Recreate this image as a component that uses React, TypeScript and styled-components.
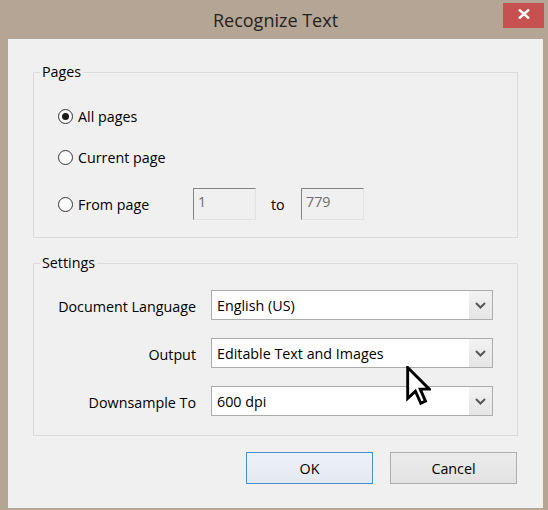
import React from "react";
import styled, { createGlobalStyle } from "styled-components";

const GlobalStyle = createGlobalStyle`
  html, body {
    margin: 0;
    padding: 0;
    background: #b5a595;
  }
  body {
    font-family: "Open Sans", "Noto Sans", "Liberation Sans", sans-serif;
    color: #000;
  }
  * { box-sizing: border-box; }
`;

const Window = styled.div`
  position: relative;
  width: 548px;
  height: 510px;
  display: flex;
  flex-direction: column;
  background: #b5a595;
  padding: 0 5px 2px 8px;
`;

const TitleBar = styled.div`
  height: 39px;
  flex: none;
  display: grid;
  grid-template-columns: 1fr auto 1fr;
  align-items: start;
`;

const Title = styled.div`
  grid-column: 2;
  font-size: 18px;
  line-height: 39px;
  padding-top: 1px;
  color: #262220;
  white-space: nowrap;
`;

const CloseButton = styled.div`
  grid-column: 3;
  justify-self: end;
  margin-top: 3px;
  margin-right: -1px;
  width: 41px;
  height: 25px;
  background: #c75050;
  display: flex;
  align-items: center;
  justify-content: center;
  padding-bottom: 3px;
`;

const Client = styled.div`
  flex: 1;
  background: #f0f0f0;
  padding: 24px 25px 0 25px;
  display: flex;
  flex-direction: column;
`;

const Group = styled.fieldset<{ $top?: number }>`
  margin: ${(p) => p.$top ?? 0}px 0 0 0;
  padding: 0;
  border: 1px solid #dcdcdc;
  min-width: 0;
`;

const Legend = styled.legend`
  margin-left: 6px;
  padding: 0 2px;
  font-size: 14.3px;
  line-height: 18px;
  color: #000;
`;

const PagesBody = styled.div`
  padding: 25px 24px 17px 24px;
  display: flex;
  flex-direction: column;
  gap: 21px;
`;

const RadioRow = styled.div<{ $height?: number }>`
  display: flex;
  align-items: center;
  height: ${(p) => p.$height ?? 20}px;
  font-size: 14.3px;
`;

const RadioLabel = styled.label<{ $width?: number }>`
  display: flex;
  align-items: center;
  gap: 5px;
  flex: none;
  width: ${(p) => (p.$width ? `${p.$width}px` : "auto")};
  white-space: nowrap;
`;

const RadioCircle = styled.span<{ $checked?: boolean }>`
  width: 15px;
  height: 15px;
  border-radius: 50%;
  border: 1px solid #333;
  background: #fcfcfc;
  display: flex;
  align-items: center;
  justify-content: center;
  flex: none;
  &::after {
    content: "";
    width: 7px;
    height: 7px;
    border-radius: 50%;
    background: ${(p) => (p.$checked ? "#1a1a1a" : "transparent")};
  }
`;

const NumberBox = styled.div`
  width: 63px;
  height: 32px;
  border-top: 1px solid #838383;
  border-left: 1px solid #838383;
  border-right: 1px solid #e3e3e3;
  border-bottom: 1px solid #e3e3e3;
  background: #f0f0f0;
  color: #6d6d6d;
  font-size: 14.3px;
  line-height: 18px;
  padding: 4px 4px 0 4px;
`;

const ToLabel = styled.span`
  width: 45px;
  padding-left: 15px;
  flex: none;
`;

const SettingsBody = styled.div`
  padding: 18px 24px 19px 24px;
  display: grid;
  grid-template-columns: 138px 282px;
  column-gap: 15px;
  row-gap: 18px;
  align-items: center;
`;

const FieldLabel = styled.div`
  text-align: right;
  font-size: 14.3px;
  padding-top: 3px;
  white-space: nowrap;
`;

const Combo = styled.div`
  height: 30px;
  border: 1px solid #acacac;
  background: #fff;
  display: flex;
  align-items: stretch;
  font-size: 14.3px;
`;

const ComboValue = styled.div`
  flex: 1;
  padding-left: 5px;
  display: flex;
  align-items: center;
  white-space: nowrap;
`;

const ComboArrow = styled.div`
  width: 23px;
  flex: none;
  background: linear-gradient(#f2f2f2, #e5e5e5);
  display: flex;
  align-items: center;
  justify-content: center;
`;

const ButtonRow = styled.div`
  margin-top: 16px;
  display: flex;
  justify-content: flex-end;
  gap: 17px;
  padding-right: 1px;
`;

const Button = styled.button<{ $default?: boolean }>`
  width: 127px;
  height: 32px;
  font-family: inherit;
  font-size: 14.3px;
  color: #000;
  border: 1px solid ${(p) => (p.$default ? "#4a8fd0" : "#adadad")};
  background: ${(p) =>
    p.$default
      ? "linear-gradient(#edf2f7, #e3e9ef)"
      : "linear-gradient(#ececec, #e2e2e2)"};
  padding: 0;
`;

const Cursor = styled.svg`
  position: absolute;
  left: 406px;
  top: 366px;
  pointer-events: none;
`;

const Chevron = () => (
  <svg width="11" height="7" viewBox="0 0 11 7">
    <path d="M1 1 L5.5 5.5 L10 1" fill="none" stroke="#555" strokeWidth="2" />
  </svg>
);

const Radio = ({ label, checked, width }: { label: string; checked?: boolean; width?: number }) => (
  <RadioLabel $width={width}>
    <RadioCircle $checked={checked} />
    {label}
  </RadioLabel>
);

export default function App() {
  return (
    <>
      <GlobalStyle />
      <Window>
        <TitleBar>
          <Title>Recognize Text</Title>
          <CloseButton>
            <svg width="12" height="10" viewBox="0 0 12 10">
              <path d="M1 0.5 L11 9.5 M11 0.5 L1 9.5" stroke="#fff" strokeWidth="2.4" />
            </svg>
          </CloseButton>
        </TitleBar>
        <Client>
          <Group>
            <Legend>Pages</Legend>
            <PagesBody>
              <RadioRow>
                <Radio label="All pages" checked />
              </RadioRow>
              <RadioRow>
                <Radio label="Current page" />
              </RadioRow>
              <RadioRow $height={32}>
                <Radio label="From page" width={135} />
                <NumberBox>1</NumberBox>
                <ToLabel>to</ToLabel>
                <NumberBox>779</NumberBox>
              </RadioRow>
            </PagesBody>
          </Group>
          <Group $top={16}>
            <Legend>Settings</Legend>
            <SettingsBody>
              <FieldLabel>Document Language</FieldLabel>
              <Combo>
                <ComboValue>English (US)</ComboValue>
                <ComboArrow><Chevron /></ComboArrow>
              </Combo>
              <FieldLabel>Output</FieldLabel>
              <Combo>
                <ComboValue>Editable Text and Images</ComboValue>
                <ComboArrow><Chevron /></ComboArrow>
              </Combo>
              <FieldLabel>Downsample To</FieldLabel>
              <Combo>
                <ComboValue>600 dpi</ComboValue>
                <ComboArrow><Chevron /></ComboArrow>
              </Combo>
            </SettingsBody>
          </Group>
          <ButtonRow>
            <Button $default>OK</Button>
            <Button>Cancel</Button>
          </ButtonRow>
        </Client>
        <Cursor width="25" height="39" viewBox="-0.8 -0.8 12.8 20.2">
          <path
            d="M0 0 L0 16 L4 12.2 L6.8 18.5 L9.2 17.4 L6.5 11.2 L11.2 11.2 Z"
            fill="#fff"
            stroke="#000"
            strokeWidth="1.5"
            strokeLinejoin="miter"
          />
        </Cursor>
      </Window>
    </>
  );
}
